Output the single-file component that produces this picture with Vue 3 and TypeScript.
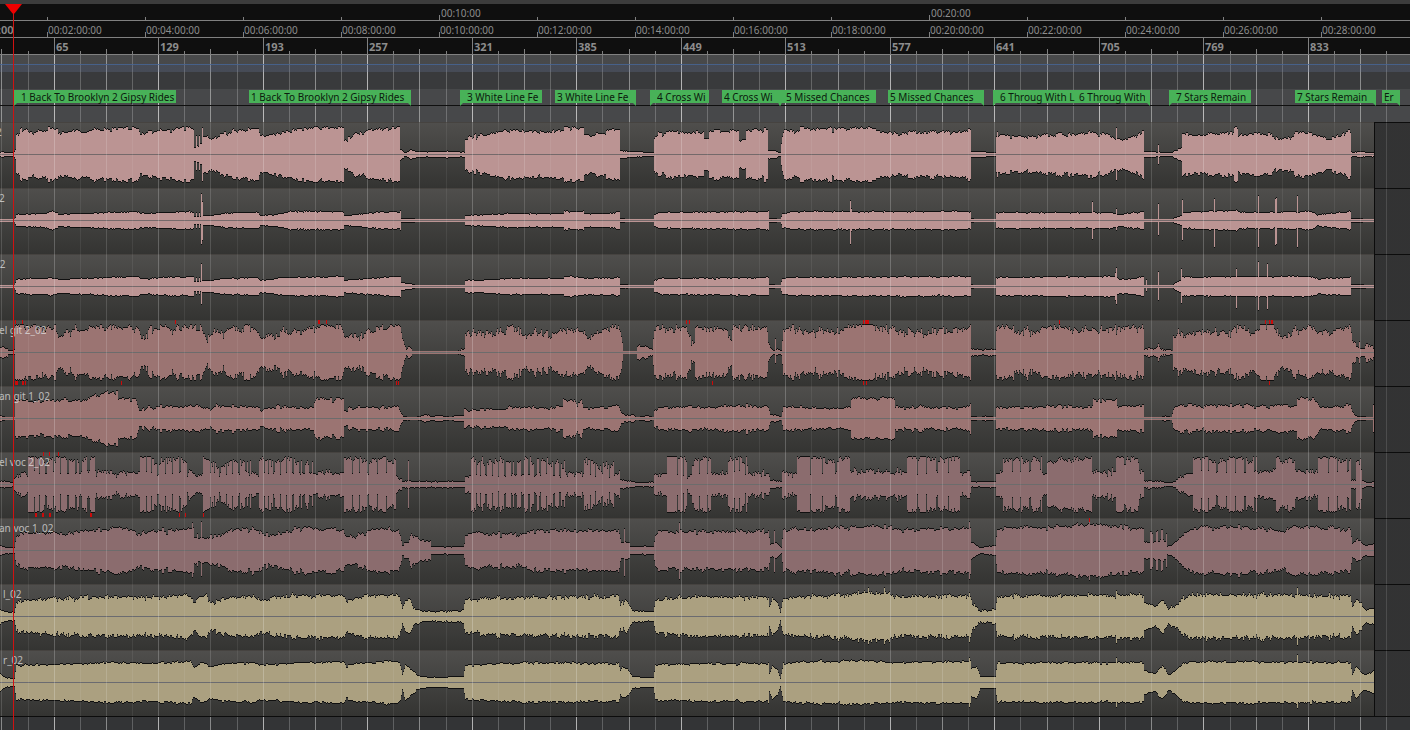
<script setup lang="ts">
import { onBeforeUnmount, onMounted, ref, computed } from 'vue'

interface GridLine { x: number; kind: 'major' | 'mid' | 'minor'; bar: number }
interface Marker { x: number; width: number; text: string; edge: 'start' | 'end' }
interface Track {
  name: string
  x: number
  tone: string
  noise: number
  env: string
  spikes?: number[][]
  bursts?: number[][]
  clipTop?: number[][]
  clipBottom?: number[][]
}

const CENTER = 32
const SESSION_END = 1375
const STAMP_WIDTH = 56

const viewWidth = ref(window.innerWidth)
const measure = () => { viewWidth.value = window.innerWidth }
onMounted(() => window.addEventListener('resize', measure))
onBeforeUnmount(() => window.removeEventListener('resize', measure))

const grid = computed<GridLine[]>(() =>
  Array.from({ length: Math.ceil(viewWidth.value / 26.13) }, (_, k) => ({
    x: Math.round(1.4 + 26.13 * k),
    kind: k % 4 === 2 ? 'major' : k % 2 === 0 ? 'mid' : 'minor',
    bar: 65 + (k - 2) * 16,
  })),
)
const bars = computed(() => grid.value.filter((g) => g.kind === 'major' && g.x + 24 < viewWidth.value))

const two = (n: number) => String(n).padStart(2, '0')
const minutes = computed(() =>
  Array.from({ length: Math.ceil(viewWidth.value / 98) }, (_, i) => ({ x: 47 + 98 * i, min: 2 + 2 * i }))
    .filter((m) => m.x + STAMP_WIDTH < viewWidth.value),
)
const tens = computed(() => minutes.value.filter((m) => m.min % 10 === 0))

const markers: Marker[] = [
  { x: 14, width: 162, text: '1 Back To Brooklyn 2 Gipsy Rides', edge: 'start' },
  { x: 249, width: 162, text: '1 Back To Brooklyn 2 Gipsy Rides', edge: 'end' },
  { x: 460, width: 82, text: '3 White Line Fe', edge: 'start' },
  { x: 555, width: 81, text: '3 White Line Fe', edge: 'end' },
  { x: 650, width: 59, text: '4 Cross Wi', edge: 'start' },
  { x: 722, width: 59, text: '4 Cross Wi', edge: 'end' },
  { x: 779, width: 97, text: '5 Missed Chances', edge: 'start' },
  { x: 888, width: 96, text: '5 Missed Chances', edge: 'end' },
  { x: 993, width: 84, text: '6 Throug With L', edge: 'start' },
  { x: 1077, width: 73, text: '6 Throug With', edge: 'end' },
  { x: 1169, width: 82, text: '7 Stars Remain', edge: 'start' },
  { x: 1295, width: 81, text: '7 Stars Remain', edge: 'end' },
  { x: 1382, width: 18, text: 'Er', edge: 'end' },
]

const tracks: Track[] = [
  {
    name: '2', x: -4, tone: 'rose', noise: 2,
    env: '0:2 2:3 5:2 13:2 15:5 16:20 20:24 30:24 35:22 50:26 57:26 58:20 65:23 80:23 95:25 110:25 138:27 140:20 150:23 165:24 180:26 193:27 194:8 201:10 202:18 212:16 225:21 240:25 258:26 260:18 270:20 285:23 300:26 343:27 344:15 350:16 355:22 362:21 370:25 400:27 400:5 405:2 410:4 416:3 463:3 464:3 465:17 485:20 510:24 545:22 563:24 564:27 583:26 584:19 600:21 615:26 619:27 620:4 630:3 653:2 654:16 658:22 690:22 700:23 768:24 768:4 774:4 780:2 782:18 784:25 794:22 800:27 810:25 870:27 880:24 895:20 905:21 920:22 970:24 971:3 995:2 996:18 1020:19 1030:17 1050:20 1075:20 1092:22 1110:19 1120:14 1135:18 1143:23 1144:3 1172:2 1174:4 1181:7 1182:20 1195:19 1215:21 1220:20 1232:22 1236:27 1238:19 1250:20 1270:20 1280:15 1290:16 1295:23 1305:22 1315:20 1325:15 1340:20 1350:23 1351:3 1353:2 1360:3 1368:2 1375:2',
    spikes: [[196, 19, 16], [199, 19, 16], [202, 27, 27], [738, 24, 24], [997, 23, 23], [1116, 27, 26], [1158, 10, 10]],
    bursts: [[704, 709, 15, 3], [738, 746, 15, 3]],
  },
  {
    name: '2', x: -1, tone: 'rose', noise: 1,
    env: '0:1 14:1 16:6 45:7 50:9 57:8 58:6 80:7 138:9 140:7 193:9 194:4 201:4 204:5 212:5 225:7 240:8 258:8 260:5 275:6 290:9 343:9 344:5 365:7 380:8 400:9 401:2 414:2 415:1 464:1 465:5 510:7 563:7 564:9 583:9 584:7 610:7 619:9 620:2 630:1 653:1 654:6 658:8 768:9 769:2 780:1 782:7 795:9 970:9 971:2 975:1 995:1 996:8 1092:8 1110:8 1120:6 1143:9 1144:1 1172:1 1175:3 1181:5 1182:8 1236:10 1240:8 1310:9 1318:6 1350:9 1351:2 1362:2 1363:1 1375:1',
    spikes: [[196, 8, 8], [199, 8, 8], [201, 27, 24], [202, 19, 20], [850, 20, 24], [851, 12, 11], [1092, 19, 19], [1116, 12, 10], [1158, 17, 15], [1182, 21, 20], [1214, 22, 27], [1258, 25, 27], [1275, 22, 25], [1276, 23, 24], [1297, 25, 27]],
  },
  {
    name: '02', x: -6, tone: 'rose', noise: 1,
    env: '0:1 14:1 16:7 50:9 57:8 58:7 80:8 138:10 140:8 193:10 194:5 201:5 204:6 212:6 225:8 258:9 260:6 275:8 290:9 343:10 344:6 365:8 400:10 401:4 414:2 415:1 464:1 465:6 510:8 563:8 564:10 583:9 584:8 619:9 620:2 631:1 653:1 654:6 658:8 768:9 769:2 780:1 782:8 795:9 970:10 971:2 975:1 995:1 996:9 1092:10 1116:10 1119:7 1135:8 1143:10 1144:1 1172:1 1175:4 1181:6 1182:9 1236:10 1310:10 1318:8 1350:9 1351:2 1375:1',
    spikes: [[196, 9, 8], [199, 9, 8], [201, 23, 18], [1115, 14, 14], [1116, 19, 18], [1146, 7, 5], [1158, 15, 14], [1181, 18, 17], [1236, 18, 22], [1258, 25, 24], [1267, 23, 23]],
  },
  {
    name: 'el git 2_02', x: -1, tone: 'clay', noise: 4,
    env: '0:5 5:4 14:2 15:28 28:26 40:24 55:23 58:15 62:17 65:20 80:24 100:25 125:26 138:26 140:18 145:16 150:24 200:26 203:20 206:12 210:18 217:24 222:16 230:24 240:23 255:26 258:20 261:12 270:17 285:20 300:21 310:25 320:27 340:27 344:18 348:13 355:19 362:15 370:22 380:26 390:25 400:26 402:14 406:5 411:4 412:1 459:1 461:3 464:3 465:18 505:19 508:26 515:24 522:19 540:20 553:18 565:24 580:22 588:13 595:20 610:25 618:26 621:16 623:1 636:1 637:6 645:6 652:3 654:25 686:25 690:18 691:8 694:8 695:24 712:24 728:21 731:12 733:25 766:26 769:8 773:2 781:3 783:24 790:25 810:22 830:19 850:25 862:28 870:28 885:24 900:21 930:20 940:22 970:25 971:3 995:3 996:24 1015:22 1035:20 1042:27 1060:26 1075:22 1120:24 1143:27 1144:3 1158:5 1165:3 1172:2 1173:17 1190:20 1230:20 1240:26 1250:19 1262:26 1272:28 1280:18 1290:17 1295:24 1310:26 1320:19 1350:25 1352:13 1357:6 1363:3 1368:10 1371:6 1375:6',
    spikes: [[775, 14, 11], [1158, 9, 9], [1359, 11, 11]],
    clipTop: [[15, 1], [22, 1], [175, 1], [318, 2], [326, 1], [686, 1], [689, 1], [863, 1], [865, 4], [1059, 1], [1265, 1], [1269, 1], [1271, 2]],
    clipBottom: [[15, 3], [22, 2], [25, 1], [121, 1], [396, 1], [398, 1], [712, 1], [863, 1], [866, 1], [1269, 1]],
  },
  {
    name: 'an git 1_02', x: -1, tone: 'clay', noise: 2,
    env: '0:3 6:1 14:1 15:19 28:17 60:18 80:18 95:21 105:25 117:27 118:20 136:18 139:7 145:11 185:12 200:13 205:9 215:12 255:12 261:9 275:11 313:11 315:17 320:19 343:20 344:8 355:11 390:12 398:12 400:7 403:2 415:1 425:4 430:2 440:3 450:1 457:3 463:3 464:10 470:9 500:9 508:11 562:11 563:19 574:18 577:14 581:19 583:10 600:11 618:13 621:5 626:3 633:4 636:1 646:3 653:1 654:9 660:11 768:13 770:4 778:3 781:1 783:12 800:11 830:10 850:11 851:18 860:20 894:20 895:11 960:11 970:14 971:2 980:1 985:3 995:1 996:11 1092:12 1093:18 1116:19 1117:12 1143:13 1144:1 1160:1 1165:3 1171:1 1173:9 1178:14 1200:13 1296:13 1297:20 1313:20 1320:11 1350:13 1352:6 1357:2 1372:1 1375:1',
    spikes: [[1373, 14, 14], [1374, 14, 14]],
  },
  {
    name: 'el voc 2_02', x: -1, tone: 'mauve', noise: 3,
    env: '0:4 13:2 15:9 20:11 27:12 28:28 94:28 95:13 139:13 140:28 160:26 186:27 190:14 197:8 202:11 203:27 210:21 250:25 251:11 258:10 259:25 285:26 312:24 313:12 343:12 344:26 395:25 396:8 403:3 408:5 412:3 464:3 465:8 470:8 471:23 510:26 564:23 565:11 583:11 584:24 613:20 614:11 619:13 620:5 635:2 653:2 654:10 666:11 667:28 686:27 687:9 690:9 691:25 710:27 711:11 727:11 728:24 746:28 748:11 768:11 770:4 781:3 782:12 796:12 797:28 849:27 850:13 906:13 907:28 959:28 960:12 969:13 971:3 995:3 996:11 1002:12 1003:24 1041:28 1042:11 1046:11 1047:23 1091:26 1092:13 1115:13 1116:27 1138:24 1139:13 1143:13 1144:4 1172:2 1180:8 1192:12 1193:26 1256:28 1257:13 1275:13 1276:25 1294:24 1295:13 1317:13 1318:28 1350:26 1351:5 1355:4 1356:25 1360:25 1362:4 1366:2 1375:3',
    spikes: [[408, 24, 24]],
    bursts: [[28, 94, 12, 7], [140, 190, 11, 7], [205, 250, 12, 6], [259, 312, 11, 6], [344, 395, 11, 9], [471, 564, 9, 6], [584, 613, 10, 7], [670, 710, 10, 8], [728, 746, 12, 7], [797, 849, 12, 14], [907, 959, 12, 11], [1003, 1041, 13, 10], [1193, 1256, 12, 9], [1318, 1350, 12, 11]],
    clipTop: [[43, 1], [49, 1], [58, 1]],
    clipBottom: [[35, 2], [42, 2], [49, 2], [90, 2], [179, 1], [185, 1], [203, 1]],
  },
  {
    name: 'an voc 1_02', x: -1, tone: 'mauve', noise: 2,
    env: '0:5 5:3 14:3 16:14 20:17 57:18 62:15 80:19 125:22 140:16 150:19 190:21 193:22 194:12 201:14 207:13 225:17 235:21 258:20 262:15 275:15 290:20 310:23 343:20 345:14 365:15 367:21 398:21 400:14 402:5 408:9 411:17 420:11 430:10 431:4 463:4 464:8 465:15 470:18 490:16 526:16 528:20 618:20 621:8 629:8 630:4 653:4 655:15 660:19 768:19 770:6 776:8 781:3 783:21 820:22 870:25 900:21 970:22 971:8 980:3 995:5 997:22 1045:23 1089:26 1116:24 1143:22 1144:8 1149:8 1150:19 1166:18 1167:4 1171:4 1180:14 1190:20 1200:23 1265:22 1280:19 1295:24 1350:21 1352:7 1357:11 1365:5 1375:7',
    spikes: [[192, 28, 27], [197, 17, 16], [201, 29, 26], [624, 22, 26], [679, 28, 29], [774, 20, 22], [969, 29, 29], [1089, 29, 30]],
    bursts: [[1151, 1166, 9, 5]],
    clipTop: [[1089, 1]],
  },
  {
    name: 'l_02', x: 3, tone: 'sand', noise: 2,
    env: '0:8 5:5 14:4 16:16 60:18 80:19 110:20 140:19 190:21 194:14 198:19 205:21 210:14 225:18 245:21 262:16 280:20 343:21 346:15 355:20 390:22 399:20 402:8 405:16 410:16 413:8 420:6 430:5 463:6 465:17 500:18 540:19 618:20 620:12 622:14 628:15 632:6 645:5 653:5 655:17 700:20 768:19 769:9 772:17 777:14 780:4 783:18 810:21 870:23 885:23 900:20 970:21 972:14 980:6 995:7 997:20 1143:22 1144:13 1155:10 1162:16 1165:14 1168:7 1175:12 1185:19 1200:22 1350:21 1352:8 1356:18 1362:11 1366:6 1375:10',
    spikes: [[868, 29, 28], [884, 29, 28], [969, 24, 26], [1116, 26, 27], [1297, 29, 29]],
  },
  {
    name: 'r_02', x: 3, tone: 'sand', noise: 1,
    env: '0:9 5:5 14:4 16:17 60:18 80:19 110:20 140:19 190:21 194:14 198:19 205:20 210:16 225:19 255:20 262:17 280:19 343:21 346:16 355:19 390:22 399:20 402:8 405:18 410:13 417:7 430:5 463:6 465:17 500:19 540:20 618:19 620:12 622:16 628:13 632:6 645:5 653:5 655:18 700:19 768:19 769:8 772:16 777:13 780:4 783:19 810:21 870:22 900:20 970:21 971:14 976:16 980:6 995:6 997:19 1040:20 1143:20 1144:11 1155:9 1162:16 1165:14 1168:7 1175:12 1185:20 1200:21 1350:20 1352:8 1356:16 1362:9 1366:8 1375:12',
    spikes: [[969, 25, 25], [1116, 25, 25], [1297, 28, 26]],
  },
]

function hash(a: number, b: number): number {
  let h = Math.imul(a + 17, 374761393) ^ Math.imul(b + 5, 668265263)
  h = Math.imul(h ^ (h >>> 13), 1274126177)
  return ((h ^ (h >>> 16)) >>> 0) / 4294967296
}

function buildWave(track: Track, seed: number) {
  const keys = track.env.split(' ').map((p) => p.split(':').map(Number))
  const spikes = new Map((track.spikes ?? []).map((s) => [s[0], s]))
  let body = ''
  let caps = ''
  let k = 0
  for (let x = 0; x < SESSION_END; x++) {
    while (k < keys.length - 2 && keys[k + 1][0] <= x) k++
    const [x0, a0] = keys[k]
    const [x1, a1] = keys[k + 1]
    let amp = x1 > x0 ? a0 + ((a1 - a0) * (x - x0)) / (x1 - x0) : a1
    for (const [from, to, low, period] of track.bursts ?? []) {
      if (x < from || x >= to) continue
      const cycle = Math.floor((x - from) / period)
      const closed = 1 + Math.floor(hash(cycle, seed) * 3)
      const shift = period > 5 ? Math.floor(hash(cycle, seed + 7) * 3) : 0
      const phase = (x - from) % period
      if (phase >= period - closed - shift && phase < period - shift) amp = low
      else if (period > 5) amp *= 0.78 + 0.24 * hash(cycle, seed + 11)
    }
    const spread = track.noise * Math.min(1, amp / 14)
    const shared = hash(x >> 2, seed) * 0.5 + hash(x >> 1, seed + 20) * 0.5 + hash(x, seed + 40) * 0.3
    const roll = hash(x >> (seed % 2), seed + 80)
    const jag = roll > 0.86 ? spread * 0.8 : roll < 0.06 ? -spread : 0
    const limit = Math.max(28, amp)
    const drift = (shared - 0.65) * 2 * spread + jag
    let up = Math.round(Math.min(limit, amp + drift))
    let down = Math.round(Math.min(limit, amp + drift + (hash(x >> 1, seed + 120) - 0.5) * Math.min(2, spread)))
    const spike = spikes.get(x)
    if (spike) {
      up = spike[1]
      down = spike[2]
    }
    up = Math.max(1, up)
    down = Math.max(1, down)
    body += `M${x} ${CENTER - up}h1v${up + down + 1}h-1z`
    if (up > 1) caps += `M${x} ${CENTER - up}h1v1h-1z`
    if (down > 1) caps += `M${x} ${CENTER + down}h1v1h-1z`
  }
  return { body, caps }
}

const lanes = tracks.map((track, i) => ({ ...track, ...buildWave(track, i + 1) }))
</script>

<template>
  <main class="editor">
    <svg class="grid full" aria-hidden="true">
      <rect v-for="g in grid" :key="g.x" :class="g.kind" :x="g.x" y="0" width="1" height="100%" />
    </svg>

    <header class="rulers">
      <div class="ruler">
        <svg class="ticks" aria-hidden="true">
          <rect v-for="m in minutes" :key="m.x" :x="m.x" :y="m.min % 10 ? 13 : 11" width="1" height="5" />
        </svg>
        <span v-for="m in tens" :key="m.x" class="stamp" :style="{ left: m.x + 2 + 'px' }">00:{{ two(m.min) }}:00</span>
      </div>
      <div class="ruler">
        <svg class="ticks" aria-hidden="true">
          <rect v-for="m in minutes" :key="m.x" :x="m.x" y="11" width="1" height="5" />
        </svg>
        <span class="stamp origin">:00</span>
        <span v-for="m in minutes" :key="m.x" class="stamp" :style="{ left: m.x + 1 + 'px' }">00:{{ two(m.min) }}:00:00</span>
      </div>
      <div class="ruler">
        <svg class="ticks" aria-hidden="true">
          <rect v-for="g in grid" :key="g.x" :x="g.x" :y="g.kind === 'major' ? 0 : g.kind === 'mid' ? 11 : 13" width="1" height="16" />
        </svg>
        <span v-for="b in bars" :key="b.x" class="stamp bar" :style="{ left: b.x + 2 + 'px' }">{{ b.bar }}</span>
      </div>
    </header>

    <div class="band tempo"></div>
    <div class="band meter"></div>
    <nav class="band markers" aria-label="Markers">
      <button
        v-for="m in markers"
        :key="m.x"
        type="button"
        class="marker"
        :class="m.edge"
        :style="{ left: m.x + 'px', width: m.width + 'px' }"
      >
        <span class="marker-text">{{ m.text }}</span>
      </button>
    </nav>
    <div class="band spare"></div>

    <div class="tracks">
      <section v-for="(t, i) in lanes" :key="i" class="track">
        <div class="region" :style="{ width: SESSION_END + 'px' }">
          <svg class="wave" :class="t.tone" aria-hidden="true" shape-rendering="crispEdges">
            <path class="body" :d="t.body" />
            <path class="caps" :d="t.caps" />
            <rect class="axis" x="0" :y="CENTER" width="100%" height="1" />
            <rect v-for="c in t.clipTop" :key="'t' + c[0]" class="over" :x="c[0]" y="0" :width="c[1]" height="4" />
            <rect v-for="c in t.clipBottom" :key="'b' + c[0]" class="over" :x="c[0]" y="61" :width="c[1]" height="4" />
          </svg>
          <span class="name" :style="{ left: t.x + 'px' }">{{ t.name }}</span>
        </div>
      </section>
      <svg class="grid faint" aria-hidden="true">
        <rect v-for="g in grid" :key="g.x" :class="g.kind" :x="g.x" y="0" width="1" height="100%" />
      </svg>
    </div>
    <footer class="rest"></footer>

    <div class="playhead">
      <svg class="flag" viewBox="0 0 17 10" aria-hidden="true"><path d="M0 0H17L9.5 9.5H7.5Z" /></svg>
    </div>
  </main>
</template>

<style>
body {
  margin: 0;
  background: #333436;
}
</style>

<style scoped>
.editor {
  position: relative;
  display: flex;
  flex-direction: column;
  min-height: 100vh;
  overflow: hidden;
  isolation: isolate;
  background: #333436;
  color: #8c8c8c;
  font: 10px/12px "Noto Sans", "Open Sans", sans-serif;
}
.grid {
  position: absolute;
  inset: 0;
  width: 100%;
  height: 100%;
  pointer-events: none;
}
.grid.full {
  z-index: 0;
}
.full .major { fill: rgba(255, 255, 255, 0.62); }
.full .mid { fill: rgba(255, 255, 255, 0.42); }
.full .minor { fill: rgba(255, 255, 255, 0.22); }
.faint .major { fill: rgba(255, 255, 255, 0.22); }
.faint .mid { fill: rgba(255, 255, 255, 0.15); }
.faint .minor { fill: rgba(255, 255, 255, 0.07); }

.rulers {
  position: relative;
  z-index: 1;
  border-top: 4px solid #3c3c3c;
}
.ruler {
  position: relative;
  height: 16px;
  overflow: hidden;
  background: #0f0f0f;
  border-bottom: 1px solid #808080;
}
.ticks {
  position: absolute;
  inset: 0;
  width: 100%;
  height: 100%;
  fill: #808080;
}
.stamp {
  position: absolute;
  top: 3px;
  white-space: nowrap;
}
.stamp.bar {
  font-size: 11px;
  font-weight: 700;
}
.stamp.origin {
  left: -2px;
  font-size: 11px;
  font-weight: 600;
}

.band {
  position: relative;
  height: 17px;
  background: rgba(255, 255, 255, 0.1);
}
.tempo {
  background: linear-gradient(
    rgba(255, 255, 255, 0.1) 9px,
    rgba(74, 104, 152, 0.85) 9px 10px,
    rgba(120, 135, 170, 0.28) 10px
  );
}
.meter {
  background: rgba(255, 255, 255, 0.03);
}
.markers {
  z-index: 1;
  height: 16px;
  border-bottom: 1px solid #101010;
}
.spare {
  height: 16px;
}
.marker {
  position: absolute;
  top: 1px;
  height: 13px;
  padding: 0 3px;
  border: 0;
  background: #48b258;
  color: #0c1a0e;
  font: inherit;
  line-height: 15px;
  text-align: left;
}
.marker.start {
  padding: 0 0 0 7px;
}
.marker.end {
  padding: 0 5px 0 2px;
}
.marker::after {
  content: "";
  position: absolute;
  top: 13px;
  width: 3px;
  height: 3px;
  background: #48b258;
}
.marker.start::after {
  left: 0;
  clip-path: polygon(0 0, 100% 0, 0 100%);
}
.marker.end::after {
  right: 0;
  clip-path: polygon(0 0, 100% 0, 100% 100%);
}
.marker-text {
  display: block;
  overflow: hidden;
  white-space: nowrap;
}

.tracks {
  position: relative;
  border-bottom: 1px solid #0c0c0c;
}
.track {
  height: 66px;
  background: linear-gradient(#0c0c0c 1px, rgba(50, 50, 50, 0.7) 1px);
}
.region {
  position: relative;
  box-sizing: border-box;
  height: 66px;
  overflow: hidden;
  border-right: 1px solid #0c0c0c;
  background: linear-gradient(#464340 1px, #4f4e4c 1px, #343432);
}
.wave {
  position: absolute;
  inset: 0;
  width: 100%;
  height: 100%;
}
.rose .body { fill: #bb9493; }
.clay .body { fill: #9b7472; }
.mauve .body { fill: #8b6c6e; }
.sand .body { fill: #aba080; }
.caps { fill: #101010; }
.axis { fill: #74696a; }
.clay .axis,
.mauve .axis { fill: #6c6c6c; }
.sand .axis { fill: #6b6b70; }
.over { fill: #cc0a0a; }
.name {
  position: absolute;
  top: 4px;
  color: rgba(225, 225, 225, 0.75);
  white-space: nowrap;
}
.rest {
  flex: 1;
  min-height: 13px;
}
.playhead {
  position: absolute;
  z-index: 3;
  top: 4px;
  bottom: 0;
  left: 13px;
  width: 1px;
  background: #d01212;
}
.flag {
  position: absolute;
  top: 0;
  left: -8px;
  width: 17px;
  height: 10px;
  fill: #f00000;
}
</style>
